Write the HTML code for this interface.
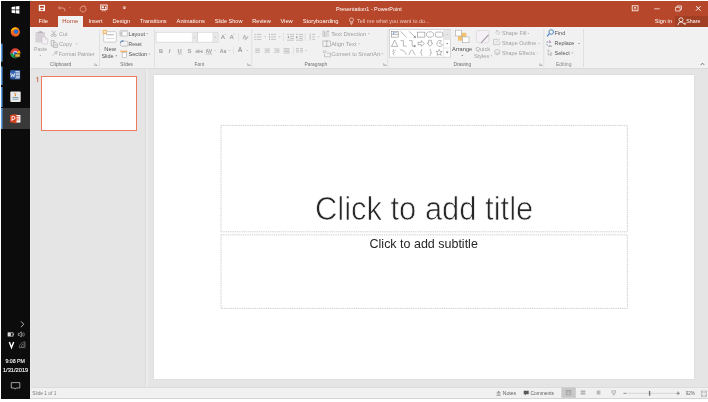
<!DOCTYPE html>
<html><head><meta charset="utf-8">
<style>
*{margin:0;padding:0;box-sizing:border-box}
html,body{width:708px;height:402px;overflow:hidden;background:#fff;font-family:"Liberation Sans",sans-serif}
.a{position:absolute}
svg{position:absolute;overflow:visible;will-change:transform}
.t{position:absolute;white-space:nowrap;line-height:1;transform-origin:0 0}
.sep{position:absolute;width:1px;background:#dadada}
.arr{position:absolute;width:0;height:0;border-left:1.5px solid transparent;border-right:1.5px solid transparent;border-top:1.5px solid #9a9a9a}
</style></head><body>
<div class="a" style="left:1px;top:1px;width:29px;height:397.5px;background:#0c0c0c"></div>
<div class="a" style="left:30px;top:1px;width:678px;height:26.3px;background:#b7472a"></div>
<div class="a" style="left:30px;top:27.3px;width:678px;height:41.5px;background:#f1f1f1;border-bottom:1px solid #dcdcdc"></div>
<div class="a" style="left:30px;top:68.8px;width:678px;height:317.8px;background:#e5e5e5"></div>
<div class="a" style="left:30px;top:386.6px;width:678px;height:12.3px;background:#f1f1f1;border-top:1.2px solid #dcdcdc;border-bottom:1px solid #d3d3da"></div>
<div class="a" style="left:30px;top:27.3px;width:0.9px;height:41.5px;background:#fafafa"></div><div class="a" style="left:30px;top:68.8px;width:0.9px;height:330px;background:#ececec"></div>
<!-- home tab -->
<div class="a" style="left:58.3px;top:15.8px;width:24.7px;height:11.5px;background:#f1f1f1"></div>
<div class="a" style="left:675.2px;top:16px;width:32.8px;height:11.3px;background:#a13f25"></div>
<!-- slide pane -->
<div class="a" style="left:145px;top:68.8px;width:3px;height:317.8px;background:#ececec;border-left:1px solid #dcdcdc"></div>
<div class="a" style="left:41.2px;top:76px;width:96px;height:55.3px;background:#fff;border:1.5px solid #ee7b5d"></div>
<div class="a" style="left:153.7px;top:75.4px;width:540.6px;height:303.5px;background:#fff;box-shadow:0 0 1px 0.3px #cfcfcf"></div>
<svg style="left:0;top:0" width="708" height="402" viewBox="0 0 708 402"><g fill="none" stroke="#c6c6c6" stroke-width="0.9" stroke-dasharray="1.3 0.9"><rect x="221" y="125.4" width="406.4" height="106.4"/><rect x="221" y="234.8" width="406.4" height="73.6"/></g></svg>

<svg style="left:0;top:0" width="708" height="402" viewBox="0 0 708 402">
<!-- ===== taskbar ===== -->
<g fill="#fff">
 <path d="M11.6 7.1 L15 6.6 V9.6 H11.6Z M15.6 6.5 L19.4 6 V9.6 H15.6Z M11.6 10.2 H15 V13.2 L11.6 12.7Z M15.6 10.2 H19.4 V13.8 L15.6 13.3Z"/>
</g>
<!-- firefox -->
<circle cx="15.3" cy="31.9" r="4.6" fill="#f26b1d"/>
<path d="M10.9 31.2 A4.6 4.6 0 0 1 19.6 30.1 A4 4 0 0 0 14 29.5 Z" fill="#ffcb00"/>
<circle cx="16" cy="31.6" r="2.2" fill="#1f6fd8"/>
<path d="M11.2 33.5 A4.6 4.6 0 0 0 19.2 34.5 A3.6 3.6 0 0 1 13.5 35 Z" fill="#e11f4e"/>
<!-- chrome -->
<circle cx="15.3" cy="53.2" r="5" fill="#db4437"/>
<path d="M15.3 53.2 L10.3 53.2 A5 5 0 0 0 17.8 57.5Z" fill="#0f9d58"/>
<path d="M15.3 53.2 L17.8 57.5 A5 5 0 0 0 20.3 53.2 Z M15.3 53.2 L20.3 53.2 A5 5 0 0 0 19.6 50.6Z" fill="#f4b400"/>
<circle cx="15.3" cy="53.2" r="2.1" fill="#fff"/><circle cx="15.3" cy="53.2" r="1.6" fill="#4285f4"/>
<rect x="14.5" y="53.5" width="6" height="4" fill="#1d1d1d"/><rect x="15.2" y="54.2" width="4.6" height="2.6" fill="#e8b33a"/>
<!-- blue indicators -->
<rect x="1" y="43.7" width="1.5" height="18" fill="#5aa0e6"/>
<rect x="1" y="66.5" width="1.5" height="18.5" fill="#5aa0e6"/>
<rect x="1" y="87" width="1.5" height="20" fill="#5aa0e6"/>
<!-- word -->
<rect x="10.5" y="70" width="9.7" height="9.5" fill="#2b579a"/>
<rect x="15" y="71.2" width="4.6" height="7.2" fill="#fff" opacity=".9"/>
<path d="M15.6 72.5h3.5M15.6 74h3.5M15.6 75.5h3.5M15.6 77h3.5" stroke="#2b579a" stroke-width=".6"/>
<rect x="10" y="71.5" width="5.8" height="6.5" fill="#3c69b5"/>
<path d="M10.7 73 L11.7 76.8 L12.8 74 L13.9 76.8 L14.9 73" stroke="#fff" stroke-width=".7" fill="none"/>
<!-- java-ish -->
<rect x="10.3" y="91.6" width="10.4" height="10.4" rx="1" fill="#e9e9e9"/>
<path d="M14.5 92.8 q2 1.5 0.5 3.5" stroke="#e76f00" stroke-width="1" fill="none"/>
<path d="M12.5 97.5 h6 M12.5 99.2 h6" stroke="#5382a1" stroke-width=".7"/>
<!-- ppt active -->
<rect x="1" y="108" width="29" height="21" fill="#393939"/>
<rect x="1" y="108" width="1.5" height="21" fill="#5aa0e6"/>
<rect x="14" y="115" width="6.4" height="7.6" fill="#fff"/>
<path d="M15 116.5h4.5M15 118.2h4.5M15 119.9h4.5" stroke="#d04423" stroke-width=".7"/>
<path d="M10 115 L16.5 113.9 V123.4 L10 122.3Z" fill="#d04423"/>
<path d="M12 121 V116.4 H13.6 Q15 116.4 15 117.9 Q15 119.4 13.6 119.4 H12" stroke="#fff" stroke-width=".9" fill="none"/>
<!-- tray -->
<path d="M21 321.3 L23.7 324.2 L21 327.2" stroke="#e0e0e0" stroke-width=".8" fill="none"/>
<rect x="8" y="332.8" width="5" height="3.3" fill="none" stroke="#ddd" stroke-width=".7"/><rect x="8" y="332.8" width="2.8" height="3.3" fill="#ddd"/><rect x="13" y="333.7" width=".8" height="1.5" fill="#ddd"/>
<path d="M18.3 333.4h1.2l1.8-1.6v5.2l-1.8-1.6h-1.2z" fill="none" stroke="#ddd" stroke-width=".6"/>
<path d="M22.3 333.2q.9 1.3 0 2.6 M23.6 332.4q1.5 2.1 0 4.2" stroke="#ddd" stroke-width=".5" fill="none"/>
<path d="M9.3 342 L11.5 347.6 L13.7 342" stroke="#fff" stroke-width="1.4" fill="none"/>
<g stroke="#9a9a9a" stroke-width=".55" fill="none"><path d="M19.2 347.6 A6 6 0 0 1 25 341.8 M21 347.6 A4.2 4.2 0 0 1 25 343.6 M22.8 347.6 A2.3 2.3 0 0 1 25 345.4 M25 341.8 V347.6 H19.2"/></g>
<path d="M11.3 382.6 H19.8 V388 H16.2 L15.4 389.2 L14.6 388 H11.3Z" fill="none" stroke="#ddd" stroke-width=".7"/>

<!-- ===== title bar ===== -->
<g fill="none" stroke="#fff">
 <rect x="38.8" y="4.9" width="6.2" height="6.2" fill="#fff" stroke="none"/>
 <rect x="39.9" y="5.9" width="4" height="1.8" fill="#b7472a" stroke="none"/>
 <rect x="40.5" y="8.8" width="2.8" height="1.4" fill="#b7472a" stroke="none"/>
</g>
<g fill="none" stroke="#df9a88" stroke-width="1">
 <path d="M60 6.3 L58.5 8 L60.3 9.3 M58.7 8 H62.5 Q65 8 65 10 Q65 11 63.8 11.2"/>
 <path d="M84.6 6.6 A2.9 2.9 0 1 0 85.9 8.3"/><path d="M83.5 5.8 L85.5 6.4 L85.2 8.4" stroke-width=".8"/>
</g>
<path d="M68.9 7.2h1.8l-.9 1z" fill="#df9a88"/>
<g stroke="#fff" fill="none" stroke-width=".9">
 <path d="M100.2 5 H107.6 M100.7 5.3 V9.6 H107.1 V5.3"/>
 <path d="M103.9 9.6 L102.2 11.2 M103.9 9.6 L105.6 11.2"/>
</g>
<rect x="101.8" y="6.3" width="2" height="2" fill="#fff"/><rect x="105" y="6.8" width="1.2" height="1.8" fill="#fff"/>
<path d="M123.2 6.6h2.4 M123.2 7.7h2.4l-1.2 1.4z" stroke="#fff" stroke-width=".5" fill="#fff"/>
<g stroke="#fff" fill="none" stroke-width=".8">
 <rect x="632.2" y="5.8" width="5.8" height="5"/>
 <path d="M635.1 9.8 V7.2 M634 8.3 L635.1 7.2 L636.2 8.3"/>
 <path d="M654.3 8.8 H659.7" stroke-width=".7"/>
 <path d="M675.6 7.3 H680.1 V11 H675.6Z M677 7.3 V5.9 H681.5 V9.6 H680.1" stroke-width=".7"/>
 <path d="M696 6.1 L700.6 10.7 M700.6 6.1 L696 10.7" stroke-width="1"/>
</g>
<!-- tell me bulb -->
<g stroke="#f0d4cc" fill="none" stroke-width=".7">
 <circle cx="351.5" cy="19.9" r="2"/><path d="M350.7 21.8 V23.5 H352.3 V21.8 M350.9 24.4 H352.1"/>
</g>
<!-- share person -->
<g stroke="#fff" fill="none" stroke-width=".8">
 <circle cx="681" cy="19.7" r="2"/><path d="M677.8 25.2 Q678 22 681 22 Q683.5 22 684 24"/><path d="M683.6 23.8h2.6M684.9 22.5v2.6" stroke-width=".6"/>
</g>
</svg>
<svg style="left:0;top:0" width="708" height="402" viewBox="0 0 708 402">
<!-- separators -->
<g fill="#dcdcdc">
<rect x="99" y="29" width=".8" height="38"/>
<rect x="154.2" y="29" width=".8" height="38"/>
<rect x="251.4" y="29" width=".8" height="38"/>
<rect x="387.4" y="29" width=".8" height="38"/>
<rect x="543.4" y="29" width=".8" height="38"/>
<rect x="583.2" y="29" width=".8" height="38"/>
<rect x="238" y="33" width=".7" height="8"/>
<rect x="233.1" y="46.7" width=".7" height="7.7"/>
<rect x="283.2" y="33" width=".7" height="8"/>
<rect x="304.8" y="33" width=".7" height="8"/>
<rect x="293" y="46.5" width=".7" height="8"/>
</g>
<!-- dialog launchers -->
<g stroke="#a0a0a0" stroke-width=".6" fill="none">
<path d="M94.6 63.2v2.3h2.3 M95.2 63.8 L96.9 65.5 M96 65.5h.9v-.9"/>
<path d="M247.6 63.2v2.3h2.3 M248.2 63.8 L249.9 65.5 M249 65.5h.9v-.9"/>
<path d="M383.6 63.2v2.3h2.3 M384.2 63.8 L385.9 65.5 M385 65.5h.9v-.9"/>
<path d="M539.6 63.2v2.3h2.3 M540.2 63.8 L541.9 65.5 M541 65.5h.9v-.9"/>
</g>
<path d="M36.2 78.3 L37.7 77.1 V82.2" stroke="#c9725c" stroke-width="1" fill="none"/>
<!-- collapse caret -->
<path d="M700.8 64.9 L702.5 63.2 L704.2 64.9" stroke="#555" stroke-width=".85" fill="none"/>

<!-- ===== Clipboard ===== -->
<rect x="35.4" y="32.1" width="9.6" height="10.5" fill="#d7d2d7"/>
<path d="M37.6 33 L38.4 31.4 H39.5 Q40.4 30.2 41.3 31.4 H42.4 L43.2 33Z" fill="#b9b4b9"/>
<path d="M42 37 H45.6 L47.7 39.1 V44 H42Z" fill="#f4eff4" stroke="#cdc6cd" stroke-width=".6"/>
<path d="M45.6 37 V39.1 H47.7" fill="none" stroke="#cdc6cd" stroke-width=".5"/>
<g stroke="#a8a8a8" stroke-width=".7" fill="none">
 <circle cx="52.3" cy="35.4" r="1.1"/><circle cx="55.2" cy="35.4" r="1.1"/>
 <path d="M52.8 34.4 L55.8 30.6 M54.7 34.4 L51.7 30.6"/>
 <path d="M51.3 40.6 H54.2 V43 M51.3 40.6 V46 H53.2"/>
 <path d="M53.4 42.6 H56.1 L57.4 43.9 V47.4 H53.4Z"/>
 <path d="M52.9 55.6 L55.3 53.2 M54.6 52.2 L57.4 51.3 L56.4 54.2Z"/>
</g>
<g stroke="#ababab" stroke-width=".5"><path d="M54 44.6h2.5M54 45.8h2.5"/></g>
<!-- arrows -->
<g fill="#9d9d9d">
<path d="M39.4 54.9h1.8l-.9 1z"/>
<path d="M75.8 43.6h1.6l-.8.9z"/>
<path d="M115.4 55.6h1.8l-.9 1z" fill="#555"/>
<path d="M146.4 33.4h1.6l-.8.9z" fill="#555"/>
<path d="M148.5 53.7h1.6l-.8.9z" fill="#555"/>
<path d="M214.4 50.2h1.6l-.8.9z"/>
<path d="M228.4 50.2h1.6l-.8.9z"/>
<path d="M246.5 50.2h1.6l-.8.9z"/>
<path d="M264.4 36.5h1.6l-.8.9z"/>
<path d="M278.9 36.5h1.6l-.8.9z"/>
<path d="M317.8 36.5h1.6l-.8.9z"/>
<path d="M305.4 50.2h1.6l-.8.9z"/>
<path d="M368 33.3h1.6l-.8.9z"/>
<path d="M358.3 43.5h1.6l-.8.9z"/>
<path d="M381.8 53.6h1.6l-.8.9z"/>
<path d="M461.4 55h1.8l-.9 1z" fill="#555"/>
<path d="M490.8 55.6h1.6l-.8.9z"/>
<path d="M527.6 33h1.6l-.8.9z"/>
<path d="M538.3 43h1.6l-.8.9z"/>
<path d="M536.8 52.7h1.6l-.8.9z"/>
<path d="M578.3 43h1.6l-.8.9z" fill="#555"/>
<path d="M571.4 52.7h1.6l-.8.9z" fill="#555"/>
</g>

<!-- ===== Slides ===== -->
<rect x="103.7" y="31.7" width="12.6" height="10.4" rx="1" fill="#fff" stroke="#c4c4c4" stroke-width=".8"/>
<rect x="106" y="34.2" width="8" height="1.1" fill="#b8b8b8"/>
<rect x="106" y="38.1" width="8" height=".6" fill="#c4c4c4"/>
<rect x="102.6" y="29.9" width="4.3" height="4.1" fill="#f3b469"/>
<rect x="103.6" y="30.9" width="2.3" height="2.1" fill="#fde9cf"/>
<rect x="119.8" y="30.4" width="8" height="5.8" rx=".8" fill="#d9d9d9" stroke="#bdbdbd" stroke-width=".5"/>
<rect x="122.6" y="32" width="4.2" height="3.4" fill="#fafafa"/>
<path d="M121.2 32v3.4" stroke="#a9a9a9" stroke-width=".6"/>
<rect x="120.6" y="41.2" width="7.2" height="5.1" rx=".6" fill="#f4f4f4" stroke="#adadad" stroke-width=".6"/>
<path d="M121.6 45.4 h5.2" stroke="#cfcfcf" stroke-width=".5"/>
<path d="M120.5 42.8 Q120.5 41 122.6 41" stroke="#3b6fc0" stroke-width=".9" fill="none"/><path d="M122.4 40 L123.9 41 L122.4 42Z" fill="#3b6fc0"/>
<rect x="120.2" y="50.6" width="7.1" height="1.6" fill="#f5b977"/>
<rect x="122.2" y="52.6" width="4.4" height="5.1" fill="#fff" stroke="#a9a9a9" stroke-width=".6"/>

<!-- ===== Font ===== -->
<rect x="156.4" y="32.6" width="35.5" height="9.3" fill="#fff"/>
<rect x="191.9" y="32.6" width="5.2" height="9.3" fill="#e8e8e8"/>
<rect x="198" y="32.6" width="14.4" height="9.3" fill="#fff"/>
<rect x="212.4" y="32.6" width="5.2" height="9.3" fill="#e8e8e8"/>
<rect x="156" y="32.2" width="41.5" height="10" fill="none" stroke="#d4d4d4" stroke-width=".7"/>
<rect x="197.6" y="32.2" width="20.4" height="10" fill="none" stroke="#d4d4d4" stroke-width=".7"/>
<path d="M193.7 36.8h1.6l-.8.9z M214.2 36.8h1.6l-.8.9z" fill="#a0a0a0"/>
<g fill="#9c9c9c" font-family="Liberation Sans" font-weight="bold">
 <text x="158.9" y="53" font-size="5.6">B</text>
 <text x="168.8" y="53" font-size="5.8" font-style="italic">I</text>
 <text x="177.6" y="53" font-size="5.8">U</text>
 <text x="187.4" y="53.3" font-size="6">S</text>
 <text x="195.6" y="53" font-size="4.8" font-weight="normal" textLength="7.3" lengthAdjust="spacingAndGlyphs">abc</text>
 <text x="205.5" y="52.6" font-size="5" textLength="6.5" lengthAdjust="spacingAndGlyphs">AV</text>
 <text x="220.8" y="39.4" font-size="6">A</text>
 <text x="229.6" y="39.4" font-size="6">A</text>
 <text x="219.8" y="52.6" font-size="5.4" textLength="6.6" lengthAdjust="spacingAndGlyphs">Aa</text>
 <text x="237.8" y="52" font-size="6.4">A</text>
</g>
<g stroke="#a6a6a6" stroke-width=".6" fill="none">
 <path d="M177.7 54h4.4 M195.6 51.5h7.4 M205.6 54h6.6"/>
 <path d="M224.6 34.6 l.8-.7 .8.7 M233.3 33.9 l.8.7 .8-.7" stroke-width=".5"/>
 
</g>
<text x="242.6" y="38.6" font-size="5.6" font-family="Liberation Sans" font-weight="bold" fill="#a6a6a6">A</text><path d="M245.6 40.6 L248.8 37.2 L247.2 35.8 L244 39.2Z" fill="#c4c4c4" stroke="#f1f1f1" stroke-width=".4"/>

<!-- ===== Paragraph ===== -->
<g stroke="#a8a8a8" stroke-width=".6" fill="none">
 <path d="M256.6 34.4h4.8 M256.6 36.9h4.8 M256.6 39.4h4.8"/>
 <path d="M271 34.4h5 M271 36.9h5 M271 39.4h5"/>
 <path d="M290 34.4h4 M290 36.4h4 M290 38.4h4 M287 40.2h7 M287 34.4h2"/>
 <path d="M299 34.4h4 M299 36.4h4 M299 38.4h4 M296 40.2h7 M296 34.4h2"/>
 <path d="M312.2 34.4h3 M312.2 36.9h3 M312.2 39.4h3 M310.2 33.6 v6.8"/>
 <path d="M255 49h5 M255.5 50.6h4 M255 52.2h5"/>
 <path d="M264.5 49h5.5 M265 50.6h4.5 M264.5 52.2h5.5"/>
 <path d="M274 49h5.5 M275.5 50.6h4 M274 52.2h5.5"/>
 <path d="M283.6 48.6h6 M283.6 50.1h6 M283.6 51.6h6 M283.6 53.1h6"/>
 <path d="M296 48.6h3 M296 50.3h3 M296 52h3 M300 48.6h3 M300 50.3h3 M300 52h3"/>
</g>
<g fill="#a8a8a8">
 <rect x="254.6" y="33.9" width="1" height="1"/><rect x="254.6" y="36.4" width="1" height="1"/><rect x="254.6" y="38.9" width="1" height="1"/>
 <rect x="269" y="33.6" width=".8" height="1.6"/><rect x="269" y="36.1" width=".8" height="1.6"/><rect x="269" y="38.6" width=".8" height="1.6"/>
</g>
<path d="M287.3 37.3l1.6-1.2v2.4z M297.8 37.3l-1.6-1.2v2.4z" fill="#8a8a8a"/>
<g stroke="#a8a8a8" stroke-width=".6" fill="none">
 <path d="M323 30.6 V37 M324.5 30.6 V37 M326 31.6 V37 M328 30.6 V37 M327 32 l1-1.4 1 1.4"/>
 <rect x="322.9" y="41" width="7.6" height="5.3"/><path d="M326.7 40.2 v6.9 M325.8 41.7 l.9-.9 .9.9 M325.8 45.6 l.9.9 .9-.9"/>
 <path d="M322.8 51 h4 M322.8 52.4 h3 M324.5 53.8 v3 h6 v-3.6 h-4"/>
</g>

<!-- ===== Drawing gallery ===== -->
<rect x="389.6" y="29.6" width="61" height="27.6" fill="#fff" stroke="#c9c9c9" stroke-width=".7"/>
<rect x="443.6" y="29.9" width="7" height="9.4" fill="#e6e6e6"/>
<path d="M443.6 29.6 V57.2 M443.6 39.3 H450.6 M443.6 48 H450.6" stroke="#d6d6d6" stroke-width=".6"/>
<path d="M446.2 34.6h1.8" stroke="#aaa" stroke-width=".5"/>
<path d="M446.2 43.3h2l-1 1z" fill="#444"/>
<path d="M446 51.4h2.4" stroke="#555" stroke-width=".45"/><path d="M446.1 52.3h2.2l-1.1 1.3z" fill="#555"/>
<g stroke="#707070" stroke-width=".48" fill="none">
 <rect x="391.6" y="31.4" width="6.6" height="5.7"/><path d="M391.6 34.4h6.6 M394.5 32.6h2.8"/>
 <path d="M400.4 31.3 L406.6 37.3"/>
 <path d="M408.9 31.3 L415.3 37.3"/><path d="M415.6 37.6 l-1.6-.3 1.1-1.1z" fill="#6a6a6a"/>
 <rect x="417.6" y="32.1" width="7.3" height="5"/>
 <path d="M428 31.9 h4 l1.5 1.6 v2.1 l-1.5 1.5 h-4 l-1.5-1.5 v-2.1z"/>
 <rect x="435.4" y="32.1" width="7.4" height="5" rx="1.4"/>
 <path d="M391.5 46.4 L394.7 40.1 L397.8 46.4Z"/>
 <path d="M400.5 40.6 H403.4 V46.1 H406.5"/>
 <path d="M409.3 40.6 H412.2 V46.1 H415.2"/><path d="M415.6 46.1 l-1.3-.8 v1.6z" fill="#6a6a6a"/>
 <path d="M418 42.3 h3.4 v-1.6 l3 2.8 -3 2.8 v-1.6 h-3.4z"/>
 <path d="M428.6 40.3 h2.8 v2.8 h1.5 l-2.9 3.2 -2.9-3.2 h1.5z"/>
 <path d="M442.7 45 A3.1 3.1 0 1 1 441.4 40.8 L439.3 43.2 Z"/>
 <path d="M393 49.3 l1.2 1 -1.6 1.1 1.8 1.2 -1.6 1.2 1.6 1.2 M395.2 50.2 l.6.6"/>
 <path d="M400.2 49.8 Q404.6 50 406.5 54.8"/>
 <path d="M408.9 55 Q410.8 49 412.3 50.2 Q413.6 51 414.3 54 L415.6 55"/>
 <path d="M422.4 49.3 Q421.3 49.3 421.3 50.5 V51.6 Q421.3 52.3 420.5 52.4 Q421.3 52.5 421.3 53.2 V54.3 Q421.3 55.5 422.4 55.5"/>
 <path d="M429.6 49.3 Q430.7 49.3 430.7 50.5 V51.6 Q430.7 52.3 431.5 52.4 Q430.7 52.5 430.7 53.2 V54.3 Q430.7 55.5 429.6 55.5"/>
 <path d="M439.1 49.4 l.9 2.1 2.3.1 -1.8 1.4 .7 2.3 -2.1-1.3 -2.1 1.3 .7-2.3 -1.8-1.4 2.3-.1z"/>
</g>
<rect x="393" y="32.5" width="1.2" height="1.2" fill="#2f6fd1"/>

<!-- ===== Arrange / Quick Styles ===== -->
<rect x="458" y="32.8" width="8.3" height="7.9" fill="#f2c16d"/>
<rect x="455.4" y="30.2" width="6" height="5.8" fill="#fff" stroke="#a8a8a8" stroke-width=".6"/>
<rect x="462.4" y="36.9" width="6.6" height="5.8" fill="#fff" stroke="#a8a8a8" stroke-width=".6"/>
<rect x="476.4" y="30.5" width="12.5" height="12.2" rx="2.2" fill="#f5f0f5" stroke="#d6ced6" stroke-width=".6"/>
<path d="M488.8 35.2 L482.3 42.2 L480.6 43.6 L481.6 41.8 L488.2 34.6Z" fill="#8e8e8e"/>
<!-- shape fill/outline/effects -->
<g stroke="#b0b0b0" stroke-width=".6" fill="none">
 <path d="M495.6 32.3 L497.5 30.4 L500 32.9 L498.1 34.8 Z M496.6 30 V31.4"/>
 <path d="M493.6 39.4 H498 M493.6 39.4 V44.6 H499.8 V41.5 M496 42.8 L499.9 38.9"/>
 <circle cx="497.3" cy="52.1" r="2.7"/>
</g>
<path d="M495.8 33 L497.5 31.3 L499.3 33 L498.1 34.5Z" fill="#efe3ef"/>
<path d="M495 52.6 A2.3 2.3 0 0 0 499.6 52.6Z" fill="#cfcfcf"/>
<path d="M495.6 51.1 A2 2 0 0 1 498.6 50.2 Z" fill="#e8d8e8"/>

<!-- ===== Editing ===== -->
<circle cx="551.2" cy="32" r="2.3" fill="none" stroke="#3e79bd" stroke-width=".9"/>
<path d="M549.5 33.7 L547 36.3" stroke="#3e79bd" stroke-width="1.1"/>
<text x="546.6" y="43.3" font-size="3.4" font-family="Liberation Sans" fill="#777">a</text>
<text x="548.9" y="43.3" font-size="3.6" font-family="Liberation Sans" fill="#a070c0" font-weight="bold">b</text>
<text x="548.6" y="46.6" font-size="3.4" font-family="Liberation Sans" fill="#666">ac</text>
<path d="M546.4 44.4 L548 45.6" stroke="#3e79bd" stroke-width=".6"/>
<path d="M548.2 49.7 V55.2 L549.5 53.9 L550.6 55.9 L551.3 55.6 L550.3 53.6 H552 Z" fill="#fff" stroke="#888" stroke-width=".5"/>

<!-- ===== Status bar ===== -->
<rect x="561.4" y="387.3" width="14.4" height="10.5" fill="#c8c8c8"/>
<g stroke="#888" stroke-width=".5" fill="none">
 <rect x="566.2" y="390.7" width="4.6" height="4.2"/><path d="M567 392h3"/>
 <path d="M581 390.8h1.7v1.2H581z M583.3 390.8H585v1.2h-1.7z M581 393h1.7v1.2H581z M583.3 393H585v1.2h-1.7z"/>
 <path d="M596.5 391h4 M596.5 392h4 M596.5 393h4 M596.5 394h4 M598.5 390.8v3.6"/>
 <path d="M611.4 390.8h4.6 M612 390.8v2.4h3.4v-2.4 M613.7 393.2v1.4 M612.6 395.2l1.1-.6 1.1.6"/>
</g>
<path d="M523.7 390.8h5v3.5h-2.6l-1.2 1.2v-1.2h-1.2z" fill="#5a5a5a"/><path d="M498.6 391 l1 1.4 h-2z M496.4 393h4.4 M496.9 394.3h3.4 M496.4 395.5h4.4" stroke="#8a8a8a" stroke-width=".6" fill="#8a8a8a"/>
<path d="M623.4 393.3h3.2 M676.3 393.3h3.6 M678.1 391.5v3.6" stroke="#666" stroke-width=".7"/>
<path d="M627.6 393.3h48" stroke="#bcbcbc" stroke-width=".5"/>
<rect x="648.9" y="390.9" width="1.4" height="4.8" fill="#777"/>
<g stroke="#999" stroke-width=".5" fill="none">
 <rect x="701.2" y="391" width="5.4" height="5.6"/>
 <path d="M701.6 391.4l1.6 1.6 M706.2 391.4l-1.6 1.6 M701.6 396.2l1.6-1.6 M706.2 396.2l-1.6-1.6" stroke-width=".8"/>
</g>
</svg>
<svg style="left:0;top:0;will-change:transform" width="708" height="402" viewBox="0 0 708 402" font-family="Liberation Sans">
<text x="335.89" y="10.80" font-size="6.2" fill="#ffffff" textLength="65.82" lengthAdjust="spacingAndGlyphs" >Presentation1 - PowerPoint</text>
<text x="38.59" y="23.20" font-size="6.2" fill="#ffffff" textLength="9.52" lengthAdjust="spacingAndGlyphs" >File</text>
<text x="88.39" y="23.20" font-size="6.2" fill="#ffffff" textLength="14.12" lengthAdjust="spacingAndGlyphs" >Insert</text>
<text x="112.39" y="23.20" font-size="6.2" fill="#ffffff" textLength="17.82" lengthAdjust="spacingAndGlyphs" >Design</text>
<text x="139.99" y="23.20" font-size="6.2" fill="#ffffff" textLength="26.62" lengthAdjust="spacingAndGlyphs" >Transitions</text>
<text x="176.59" y="23.20" font-size="6.2" fill="#ffffff" textLength="28.22" lengthAdjust="spacingAndGlyphs" >Animations</text>
<text x="214.69" y="23.20" font-size="6.2" fill="#ffffff" textLength="27.72" lengthAdjust="spacingAndGlyphs" >Slide Show</text>
<text x="252.29" y="23.20" font-size="6.2" fill="#ffffff" textLength="18.42" lengthAdjust="spacingAndGlyphs" >Review</text>
<text x="280.39" y="23.20" font-size="6.2" fill="#ffffff" textLength="12.42" lengthAdjust="spacingAndGlyphs" >View</text>
<text x="302.69" y="23.20" font-size="6.2" fill="#ffffff" textLength="35.82" lengthAdjust="spacingAndGlyphs" >Storyboarding</text>
<text x="654.69" y="23.20" font-size="6.2" fill="#ffffff" textLength="17.32" lengthAdjust="spacingAndGlyphs" >Sign in</text>
<text x="686.29" y="23.20" font-size="6.2" fill="#ffffff" textLength="14.02" lengthAdjust="spacingAndGlyphs" >Share</text>
<text x="62.29" y="23.20" font-size="6.2" fill="#b7472a" textLength="16.02" lengthAdjust="spacingAndGlyphs" >Home</text>
<text x="356.99" y="23.20" font-size="6.2" fill="#ecc9bf" textLength="72.82" lengthAdjust="spacingAndGlyphs" >Tell me what you want to do...</text>
<text x="33.91" y="50.90" font-size="5.9" fill="#a0a0a0" textLength="13.39" lengthAdjust="spacingAndGlyphs" >Paste</text>
<text x="59.00" y="35.80" font-size="5.9" fill="#a0a0a0" textLength="8.49" lengthAdjust="spacingAndGlyphs" >Cut</text>
<text x="59.00" y="45.90" font-size="5.9" fill="#a0a0a0" textLength="13.09" lengthAdjust="spacingAndGlyphs" >Copy</text>
<text x="58.80" y="55.70" font-size="5.9" fill="#a0a0a0" textLength="35.89" lengthAdjust="spacingAndGlyphs" >Format Painter</text>
<text x="49.94" y="65.80" font-size="5.2" fill="#707070" textLength="21.32" lengthAdjust="spacingAndGlyphs" >Clipboard</text>
<text x="104.20" y="50.90" font-size="5.9" fill="#555555" textLength="11.79" lengthAdjust="spacingAndGlyphs" >New</text>
<text x="101.41" y="57.90" font-size="5.9" fill="#555555" textLength="12.09" lengthAdjust="spacingAndGlyphs" >Slide</text>
<text x="128.51" y="35.80" font-size="5.9" fill="#555555" textLength="16.49" lengthAdjust="spacingAndGlyphs" >Layout</text>
<text x="128.51" y="45.90" font-size="5.9" fill="#555555" textLength="13.19" lengthAdjust="spacingAndGlyphs" >Reset</text>
<text x="128.51" y="56.10" font-size="5.9" fill="#555555" textLength="18.69" lengthAdjust="spacingAndGlyphs" >Section</text>
<text x="120.34" y="65.80" font-size="5.2" fill="#707070" textLength="12.62" lengthAdjust="spacingAndGlyphs" >Slides</text>
<text x="194.44" y="65.80" font-size="5.2" fill="#707070" textLength="9.82" lengthAdjust="spacingAndGlyphs" >Font</text>
<text x="331.20" y="35.60" font-size="5.9" fill="#a0a0a0" textLength="35.09" lengthAdjust="spacingAndGlyphs" >Text Direction</text>
<text x="331.20" y="45.80" font-size="5.9" fill="#a0a0a0" textLength="25.39" lengthAdjust="spacingAndGlyphs" >Align Text</text>
<text x="331.20" y="55.90" font-size="5.9" fill="#a0a0a0" textLength="49.09" lengthAdjust="spacingAndGlyphs" >Convert to SmartArt</text>
<text x="304.44" y="65.80" font-size="5.2" fill="#707070" textLength="22.82" lengthAdjust="spacingAndGlyphs" >Paragraph</text>
<text x="452.00" y="50.90" font-size="5.9" fill="#555555" textLength="20.29" lengthAdjust="spacingAndGlyphs" >Arrange</text>
<text x="453.44" y="65.80" font-size="5.2" fill="#707070" textLength="17.82" lengthAdjust="spacingAndGlyphs" >Drawing</text>
<text x="475.50" y="50.90" font-size="5.9" fill="#a0a0a0" textLength="14.59" lengthAdjust="spacingAndGlyphs" >Quick</text>
<text x="473.90" y="57.90" font-size="5.9" fill="#a0a0a0" textLength="15.39" lengthAdjust="spacingAndGlyphs" >Styles</text>
<text x="502.00" y="35.30" font-size="5.9" fill="#a0a0a0" textLength="24.39" lengthAdjust="spacingAndGlyphs" >Shape Fill</text>
<text x="502.00" y="45.30" font-size="5.9" fill="#a0a0a0" textLength="34.29" lengthAdjust="spacingAndGlyphs" >Shape Outline</text>
<text x="502.00" y="55.00" font-size="5.9" fill="#a0a0a0" textLength="33.19" lengthAdjust="spacingAndGlyphs" >Shape Effects</text>
<text x="554.50" y="35.30" font-size="5.9" fill="#555555" textLength="10.79" lengthAdjust="spacingAndGlyphs" >Find</text>
<text x="554.50" y="45.30" font-size="5.9" fill="#555555" textLength="19.89" lengthAdjust="spacingAndGlyphs" >Replace</text>
<text x="554.50" y="55.00" font-size="5.9" fill="#555555" textLength="15.29" lengthAdjust="spacingAndGlyphs" >Select</text>
<text x="555.90" y="66.20" font-size="6.0" fill="#8a8a8a" textLength="15.60" lengthAdjust="spacingAndGlyphs" >Editing</text>
<text x="32.32" y="395.40" font-size="5.6" fill="#7a7a7a" textLength="24.06" lengthAdjust="spacingAndGlyphs" >Slide 1 of 1</text>
<text x="502.72" y="395.10" font-size="5.6" fill="#5c5c5c" textLength="13.26" lengthAdjust="spacingAndGlyphs" >Notes</text>
<text x="530.52" y="395.10" font-size="5.6" fill="#5c5c5c" textLength="23.46" lengthAdjust="spacingAndGlyphs" >Comments</text>
<text x="685.63" y="395.30" font-size="5.4" fill="#6a6a6a" textLength="9.34" lengthAdjust="spacingAndGlyphs" >92%</text>
<text x="5.42" y="363.40" font-size="5.6" fill="#f4f4f4" stroke="#f4f4f4" stroke-width="0.12" textLength="19.46" lengthAdjust="spacingAndGlyphs" >9:08 PM</text>
<text x="2.92" y="371.50" font-size="5.6" fill="#f4f4f4" stroke="#f4f4f4" stroke-width="0.12" textLength="25.36" lengthAdjust="spacingAndGlyphs" >1/31/2019</text>
<text x="314.95" y="219.65" font-size="33" fill="#262626" textLength="218.30" lengthAdjust="spacingAndGlyphs" stroke="#fff" stroke-width="0.7">Click to add title</text>
<text x="369.57" y="247.63" font-size="12.6" fill="#262626" textLength="108.26" lengthAdjust="spacingAndGlyphs" >Click to add subtitle</text>
</svg>
</body></html>
